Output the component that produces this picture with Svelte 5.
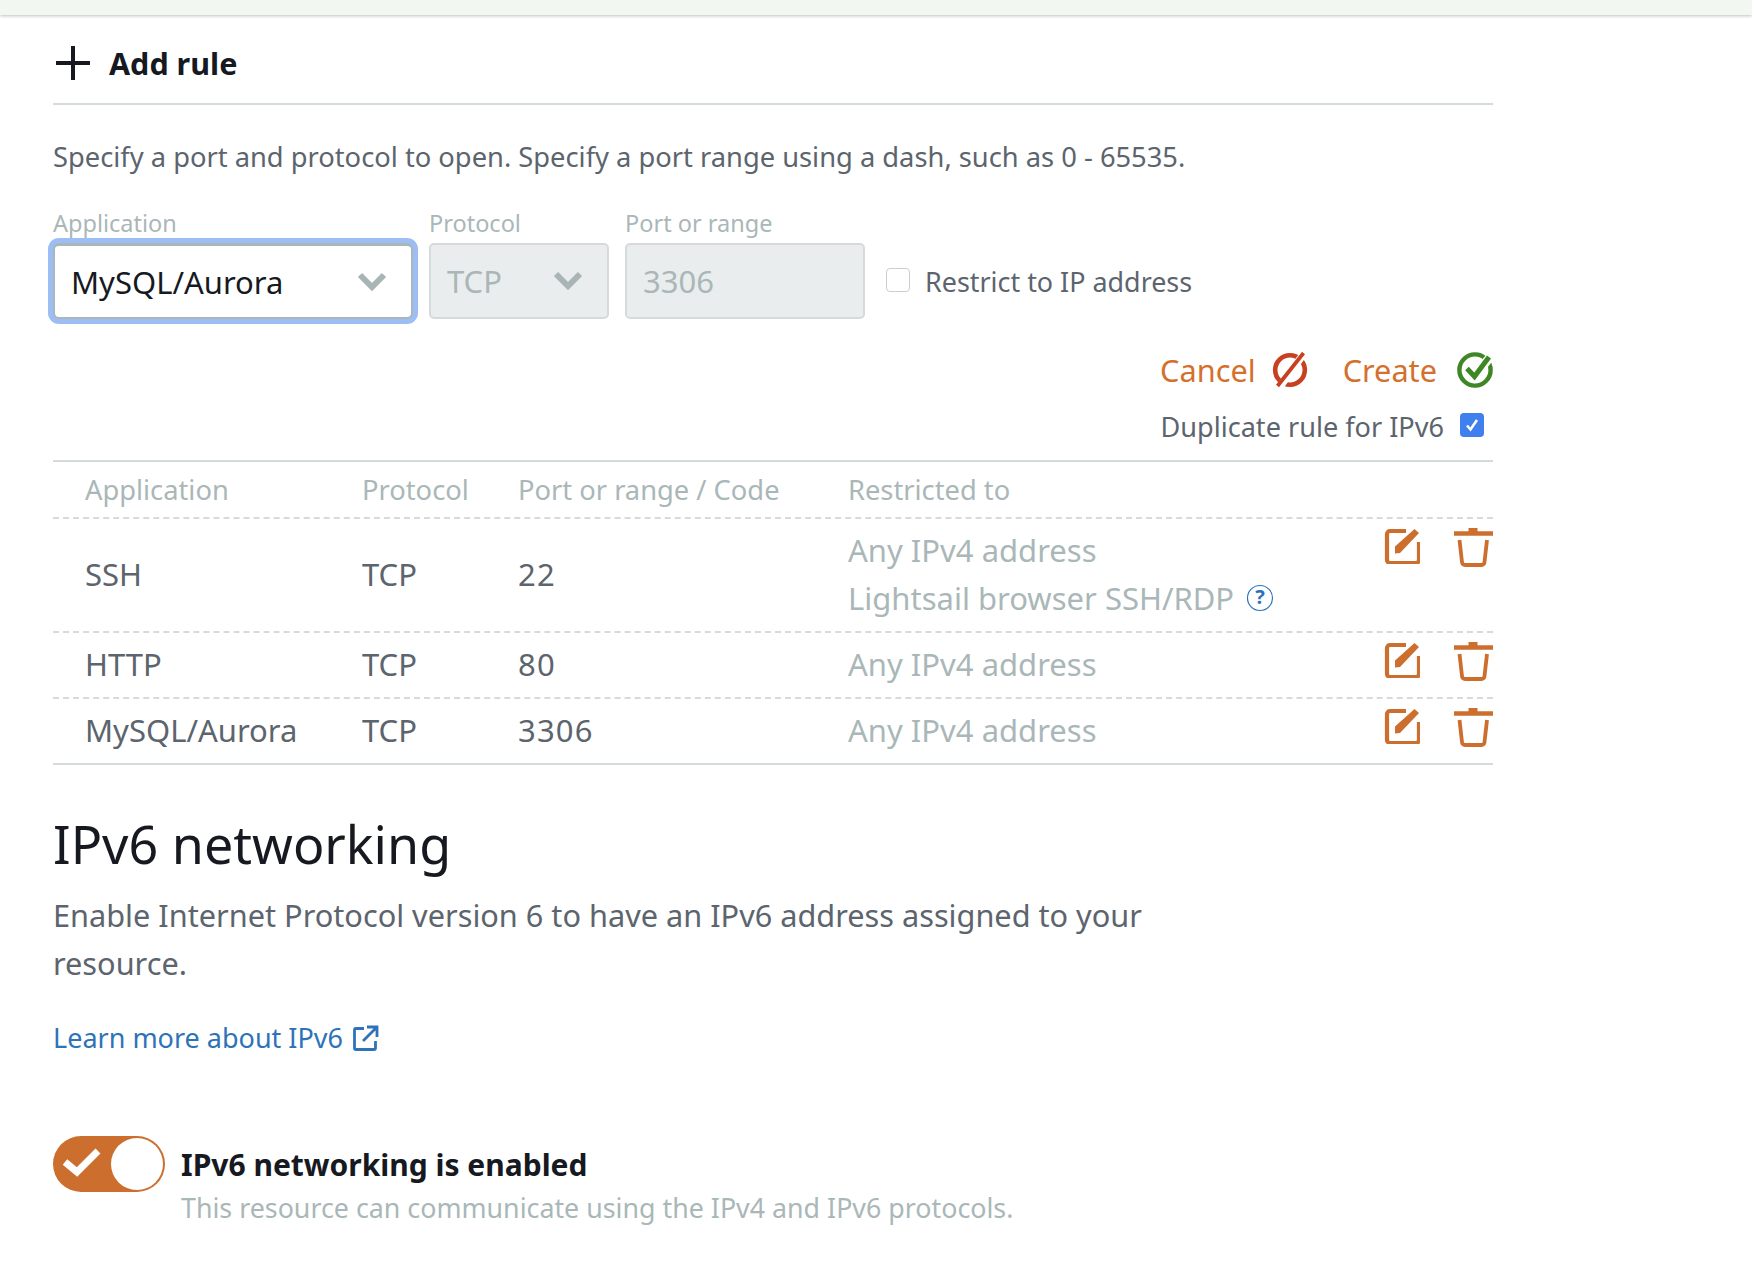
<script>
  const rows = [
    { app: 'SSH', proto: 'TCP', port: '22', lines: ['Any IPv4 address', 'Lightsail browser SSH/RDP'], tall: true },
    { app: 'HTTP', proto: 'TCP', port: '80', lines: ['Any IPv4 address'] },
    { app: 'MySQL/Aurora', proto: 'TCP', port: '3306', lines: ['Any IPv4 address'] }
  ];
</script>

<div class="page">
  <div class="topbar"></div>
  <main class="content">
    <div class="addrule">
      <svg class="plus" viewBox="0 0 36 36" width="36" height="36"><path d="M18 1v34M1 18h34" stroke="#16191f" stroke-width="4" fill="none"/></svg>
      <span>Add rule</span>
    </div>
    <p class="desc">Specify a port and protocol to open. Specify a port range using a dash, such as 0 - 65535.</p>

    <div class="form">
      <div class="field app">
        <label for="a">Application</label>
        <div class="control focus" id="a">
          <span>MySQL/Aurora</span>
          <svg class="chev" viewBox="0 0 30 20" width="30" height="20"><path d="M3 3l12 12L27 3" stroke="#a9b5b5" stroke-width="6" fill="none"/></svg>
        </div>
      </div>
      <div class="field proto">
        <label for="p">Protocol</label>
        <div class="control disabled" id="p">
          <span>TCP</span>
          <svg class="chev" viewBox="0 0 30 20" width="30" height="20"><path d="M3 3l12 12L27 3" stroke="#a9b5b5" stroke-width="6" fill="none"/></svg>
        </div>
      </div>
      <div class="field port">
        <label for="r">Port or range</label>
        <div class="control disabled" id="r"><span>3306</span></div>
      </div>
      <div class="restrict">
        <span class="box"></span>
        <span>Restrict to IP address</span>
      </div>
    </div>

    <div class="actions">
      <span class="act">Cancel</span>
      <svg class="acticon" viewBox="0 0 36 36" width="36" height="36">
        <circle cx="18" cy="18" r="14.800" fill="none" stroke="#c7401f" stroke-width="4.600"/>
        <path d="M33 0L7 36" stroke="#fff" stroke-width="7.500"/>
        <path d="M31.500 1L5.500 34" stroke="#c7401f" stroke-width="3.800"/>
      </svg>
      <span class="act create">Create</span>
      <svg class="acticon" viewBox="0 0 36 36" width="36" height="36">
        <circle cx="18" cy="18" r="15.600" fill="none" stroke="#3f8624" stroke-width="4.400"/>
        <path d="M10 16l7.500 8.500L33 5" stroke="#fff" stroke-width="9" fill="none"/>
        <path d="M10 16.500l7.500 8L32 5" stroke="#3f8624" stroke-width="5" fill="none"/>
      </svg>
    </div>
    <div class="dup">
      <span>Duplicate rule for IPv6</span>
      <span class="box checked">
        <svg viewBox="0 0 24 24" width="24" height="24"><path d="M7 12.500l3.500 4L17 7" stroke="#fff" stroke-width="2.600" fill="none"/></svg>
      </span>
    </div>

    <div class="table">
      <div class="row head">
        <div class="c1">Application</div><div class="c2">Protocol</div><div class="c3">Port or range / Code</div><div class="c4">Restricted to</div>
      </div>
      {#each rows as r}
        <div class="row body" class:tall={r.tall}>
          <div class="c1">{r.app}</div>
          <div class="c2">{r.proto}</div>
          <div class="c3 digits">{r.port}</div>
          <div class="c4 muted">
            {#each r.lines as l, i}
              <div class="line">{l}{#if i === 1}<svg class="help" viewBox="0 0 28 28" width="28" height="28"><circle cx="14" cy="14" r="12.500" fill="none" stroke="#2e73b8" stroke-width="1.200"/><text x="14" y="20" text-anchor="middle" class="q">?</text></svg>{/if}</div>
            {/each}
          </div>
          <div class="ops">
            <svg viewBox="0 0 36 36" width="36" height="36">
              <path d="M22 3H6a3 3 0 0 0-3 3v26a3 3 0 0 0 3 3h26a3 3 0 0 0 3-3V14" fill="none" stroke="#cc6f2e" stroke-width="4.200"/>
              <path d="M11 18.500L30.500 1L35 5L16 25L11 25.500z" fill="#cc6f2e"/>
            </svg>
            <svg viewBox="0 0 40 40" width="40" height="40">
              <path d="M1 5.500h39" stroke="#cc6f2e" stroke-width="4.400"/>
              <path d="M15.500 5V0h9v5" fill="#cc6f2e"/>
              <path d="M6.500 12l2.500 22a3 3 0 0 0 3 3h16.500a3 3 0 0 0 3-3L34 12" fill="none" stroke="#cc6f2e" stroke-width="3.800"/>
            </svg>
          </div>
        </div>
      {/each}
    </div>

    <h2>IPv6 networking</h2>
    <p class="lead">Enable Internet Protocol version 6 to have an IPv6 address assigned to your resource.</p>
    <a class="link" href="#learn">Learn more about IPv6
      <svg viewBox="0 0 26 26" width="26" height="26"><path d="M11 3.500H3a1.500 1.500 0 0 0-1.500 1.500v18a1.500 1.500 0 0 0 1.500 1.500h18a1.500 1.500 0 0 0 1.500-1.500v-7" fill="none" stroke="#2e73b8" stroke-width="2.800"/><path d="M10 16L23 3M14 2h10v10" fill="none" stroke="#2e73b8" stroke-width="2.800"/></svg>
    </a>

    <div class="toggle-row">
      <div class="toggle">
        <svg viewBox="0 0 44 32" width="44" height="32"><path d="M5 16l12 10L38 5" stroke="#fff" stroke-width="7" fill="none"/></svg>
        <span class="knob"></span>
      </div>
      <div class="toggle-text">
        <div class="t-title">IPv6 networking is enabled</div>
        <div class="t-sub">This resource can communicate using the IPv4 and IPv6 protocols.</div>
      </div>
    </div>
  </main>
</div>

<style>
  :global(body) { margin: 0; background: #fff; }
  .page { width: 1752px; height: 1284px; overflow: hidden; font-family: "Noto Sans", "Open Sans", sans-serif; color: #5c646d; font-size: 27.300px; }
  .topbar { height: 15px; background: #f2f7f2; box-shadow: 0 1px 3px rgba(0,0,0,.25); }
  .content { width: 1440px; margin-left: 53px; }
  .addrule { height: 90px; box-sizing: border-box; border-bottom: 2px solid #d5dbdb; display: flex; align-items: center; gap: 18px; padding: 8px 0 0 2px; font-weight: 700; font-size: 30.500px; color: #16191f; }
  .plus { flex: none; }
  .desc { margin: 0; padding-top: 32px; line-height: 40px; height: 75px; box-sizing: content-box; }
  .form { display: flex; align-items: flex-start; gap: 16px; margin-top: -1px; }
  .field label { display: block; font-size: 23.500px; line-height: 25px; color: #aab7b8; height: 32px; }
  .app { width: 360px; }
  .proto { width: 180px; }
  .port { width: 240px; margin-right: 5px; }
  .control { height: 76px; box-sizing: border-box; border-radius: 5px; display: flex; align-items: center; justify-content: space-between; padding: 0 24px 0 16px; font-size: 31px; }
  .focus { border: 2px solid #aab7b8; border-top-width: 3px; color: #16191f; background: #fff; box-shadow: 0 0 0 5px #9dbdf5; border-radius: 6px; }
  .disabled { border: 2px solid #d5dbdb; background: #eaeded; color: #aab7b8; }
  .restrict { display: flex; align-items: center; gap: 15px; height: 76px; margin-top: 32px; font-size: 26.900px; }
  .box { width: 24px; height: 24px; box-sizing: border-box; border: 1px solid #c9cfcf; border-radius: 4px; background: #fff; display: inline-block; margin-bottom: 2px; }
  .box.checked { background: #3f7fee; border: none; }
  .box svg { display: block; }
  .actions { display: flex; justify-content: flex-end; align-items: center; margin-top: 29px; height: 44px; }
  .act { color: #d4702c; font-size: 30.700px; margin-right: 16px; }
  .acticon { flex: none; }
  .create { margin-left: 35px; margin-right: 20px; }
  .dup { display: flex; justify-content: flex-end; align-items: center; gap: 16px; height: 44px; margin-top: 12px; padding-right: 9px; font-size: 27.100px; }
  .table { margin-top: 12px; border-top: 2px solid #d5dbdb; border-bottom: 2px solid #d5dbdb; }
  .row { display: flex; align-items: center; position: relative; padding-left: 32px; }
  .head { height: 55px; color: #aab7b8; }
  .body { height: 66px; border-top: 2px dashed #d5dbdb; box-sizing: border-box; font-size: 31px; padding-bottom: 2px; }
  .tall { height: 114px; }
  .c1 { width: 277px; flex: none; }
  .c2 { width: 156px; flex: none; }
  .c3 { width: 330px; flex: none; }
  .c4 { flex: 1; }
  .digits { letter-spacing: 1.200px; }
  .muted { color: #aab7b8; }
  .line { line-height: 48px; display: flex; align-items: center; gap: 12px; white-space: nowrap; }
  .help { flex: none; }
  .q { font-size: 20px; font-weight: 700; fill: #2e73b8; font-family: "Noto Sans", sans-serif; }
  .ops { position: absolute; right: 0; top: 9px; display: flex; gap: 33px; align-items: flex-start; }
  .ops svg { display: block; }
  h2 { margin: 0; padding-top: 47px; font-size: 52px; font-weight: 400; line-height: 64px; color: #16191f; }
  .lead { margin: 15px 0 0; width: 1120px; line-height: 48px; font-size: 30.700px; }
  .link { display: inline-flex; align-items: center; gap: 10px; color: #2e73b8; text-decoration: none; margin-top: 31px; line-height: 40px; font-size: 27px; }
  .toggle-row { display: flex; gap: 16px; margin-top: 78px; }
  .toggle { width: 112px; height: 56px; flex: none; border-radius: 28px; background: #cc6f2e; position: relative; }
  .toggle svg { position: absolute; left: 7px; top: 10px; }
  .knob { position: absolute; right: 2px; top: 2px; width: 52px; height: 52px; border-radius: 50%; background: #fff; }
  .t-title { font-weight: 700; font-size: 30px; color: #16191f; line-height: 56px; padding-top: 1px; }
  .t-sub { color: #aab7b8; line-height: 32px; font-size: 26.800px; margin-top: -1px; }
</style>
